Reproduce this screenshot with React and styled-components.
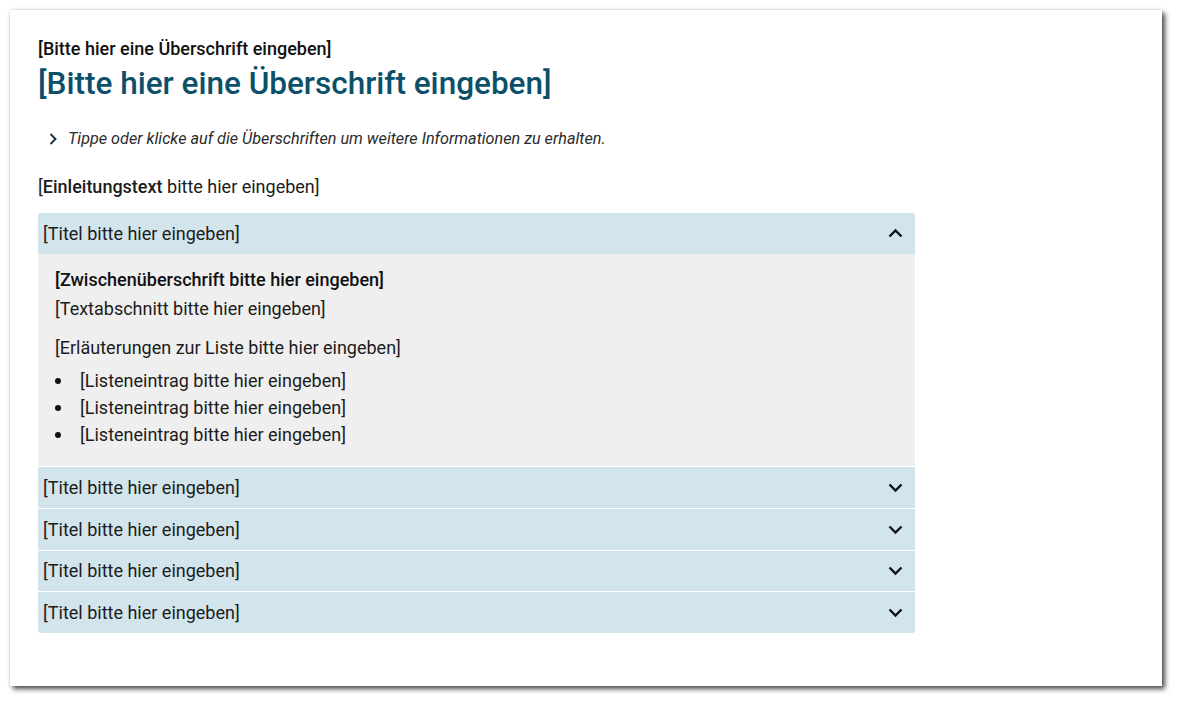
import React, { useState } from 'react';
import styled, { createGlobalStyle } from 'styled-components';

const GlobalStyle = createGlobalStyle`
  body {
    margin: 0;
    background: #ffffff;
    font-family: Roboto, "Liberation Sans", Arial, sans-serif;
    color: #1c1c1c;
  }
`;

const Card = styled.div`
  margin: 10px;
  width: 1152px;
  height: 676px;
  box-sizing: border-box;
  padding: 28px 28px;
  background: #ffffff;
  box-shadow: 3px 3px 5px rgba(0, 0, 0, 0.7), 0 0 3px rgba(0, 0, 0, 0.15);
`;

const Kicker = styled.div`
  font-size: 18px;
  line-height: 21px;
  font-weight: 500;
  color: #111;
`;

const Title = styled.h1`
  margin: 7px 0 0;
  font-size: 31.5px;
  line-height: 36px;
  font-weight: 500;
  color: #0b5068;
`;

const Hint = styled.div`
  margin-top: 27px;
  display: flex;
  align-items: center;
  gap: 8px;
  padding-left: 8px;
  font-size: 16.2px;
  line-height: 20px;
  font-style: italic;
  color: #2b2b2b;
`;

const Intro = styled.p`
  margin: 26px 0 0;
  font-size: 18px;
  line-height: 24px;
  font-weight: 400;
  color: #1c1c1c;

  strong {
    font-weight: 500;
  }
`;

const Accordion = styled.div`
  margin-top: 14px;
  width: 877px;
  border-radius: 3px;
  overflow: hidden;
`;

const Item = styled.div`
  & + & {
    border-top: 1px solid #ffffff;
  }
`;

const Header = styled.button`
  display: flex;
  align-items: center;
  justify-content: space-between;
  width: 100%;
  height: ${(p) => (p.$open ? 41 : 40.75)}px;
  padding: 0 11px 0 5px;
  border: 0;
  background: #d2e4ec;
  font-family: inherit;
  font-size: 18px;
  font-weight: 400;
  color: #1c1c1c;
  cursor: pointer;
  text-align: left;
`;

const Panel = styled.div`
  background: #efefef;
  padding: 14px 17px 18px;
  font-size: 18px;
  color: #1c1c1c;
`;

const SubHeading = styled.div`
  font-weight: 500;
  line-height: 24px;
  color: #111;
`;

const Para = styled.p`
  margin: ${(p) => p.$top}px 0 0;
  line-height: 24px;
`;

const List = styled.ul`
  margin: 7px 0 0;
  padding: 0;
  list-style: none;

  li {
    display: flex;
    align-items: center;
    line-height: 27px;
  }

  li::before {
    content: '';
    flex: 0 0 6px;
    height: 6px;
    margin: 1px 19px 0 0;
    border-radius: 50%;
    background: #111;
  }
`;

const Chevron = ({ dir, size = 17, color = '#111' }) => {
  const pts = {
    up: '2.5,11.5 8.5,5.5 14.5,11.5',
    down: '2.5,5.5 8.5,11.5 14.5,5.5',
    right: '5.5,2.5 11.5,8.5 5.5,14.5',
  }[dir];
  return (
    <svg width={size} height={size} viewBox="0 0 17 17" fill="none">
      <polyline points={pts} stroke={color} strokeWidth="2.4" strokeLinejoin="miter" />
    </svg>
  );
};

const titles = [0, 1, 2, 3, 4];

export default function App() {
  const [open, setOpen] = useState(0);
  return (
    <>
      <GlobalStyle />
      <Card>
        <Kicker>[Bitte hier eine Überschrift eingeben]</Kicker>
        <Title>[Bitte hier eine Überschrift eingeben]</Title>
        <Hint>
          <Chevron dir="right" size={14} color="#1b3344" />
          Tippe oder klicke auf die Überschriften um weitere Informationen zu erhalten.
        </Hint>
        <Intro>
          [<strong>Einleitungstext</strong> bitte hier eingeben]
        </Intro>
        <Accordion>
          {titles.map((i) => (
            <Item key={i}>
              <Header $open={open === i} onClick={() => setOpen(open === i ? -1 : i)}>
                [Titel bitte hier eingeben]
                <Chevron dir={open === i ? 'up' : 'down'} />
              </Header>
              {open === i && (
                <Panel>
                  <SubHeading>[Zwischenüberschrift bitte hier eingeben]</SubHeading>
                  <Para $top={5}>[Textabschnitt bitte hier eingeben]</Para>
                  <Para $top={15}>[Erläuterungen zur Liste bitte hier eingeben]</Para>
                  <List>
                    <li>[Listeneintrag bitte hier eingeben]</li>
                    <li>[Listeneintrag bitte hier eingeben]</li>
                    <li>[Listeneintrag bitte hier eingeben]</li>
                  </List>
                </Panel>
              )}
            </Item>
          ))}
        </Accordion>
      </Card>
    </>
  );
}
